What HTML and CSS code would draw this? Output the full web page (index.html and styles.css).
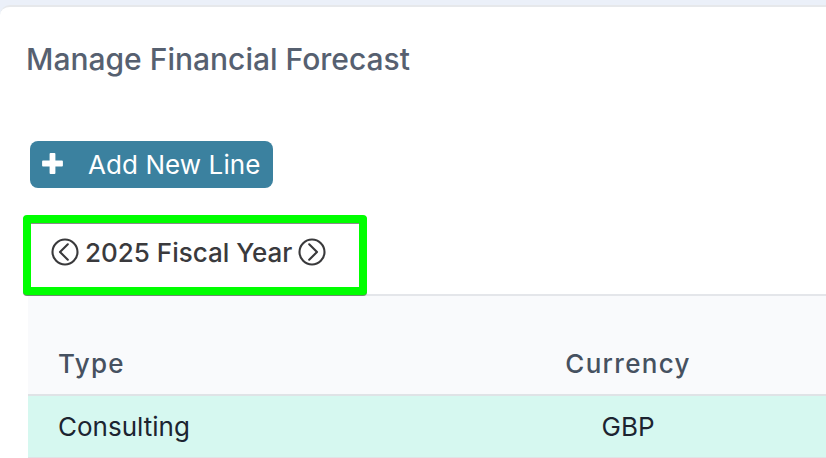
FILE: index.html
```html
<!DOCTYPE html>
<html lang="en">
<head>
    <meta charset="UTF-8">
    <meta name="viewport" content="width=device-width, initial-scale=1.0">
    <title>Manage Financial Forecast</title>
    <link rel="stylesheet" href="styles.css">
</head>
<body>
    <main class="card">
        <h1 class="card-title">Manage Financial Forecast</h1>

        <button class="btn-add" type="button">
            <svg class="icon-plus" viewBox="0 0 21 21">
                <path d="M8.5 1h4v7.5H20v4h-7.5V20h-4v-7.5H1v-4h7.5z"/>
            </svg>
            <span>Add New Line</span>
        </button>

        <!-- Year switcher -->
        <div class="year-bar">
            <div class="year-picker">
                <svg class="icon-arrow" viewBox="0 0 28 28">
                    <circle cx="14" cy="14" r="12.5"/>
                    <path d="M16.8 6.3L9 14l7.8 7.7"/>
                </svg>
                <span class="year-label">2025 Fiscal Year</span>
                <svg class="icon-arrow" viewBox="0 0 28 28">
                    <circle cx="14" cy="14" r="12.5"/>
                    <path d="M11.2 6.3L19 14l-7.8 7.7"/>
                </svg>
            </div>
        </div>

        <!-- Forecast lines -->
        <table class="forecast">
            <thead>
                <tr>
                    <th class="col-type">Type</th>
                    <th class="col-currency">Currency</th>
                </tr>
            </thead>
            <tbody>
                <tr>
                    <td class="col-type">Consulting</td>
                    <td class="col-currency">GBP</td>
                </tr>
            </tbody>
        </table>
    </main>
</body>
</html>
```

FILE: styles.css
```css
* {
    box-sizing: border-box;
}

body {
    margin: 0;
    padding-top: 5px;
    height: 458px;
    overflow: hidden;
    background-color: #ebf0f9;
    font-family: Inter, sans-serif;
    font-size: 26px;
}

.card {
    height: 460px;
    padding: 32px 0 0 28px;
    border-top: 2px solid #e6e8eb;
    border-radius: 10px 0 0 0;
    background-color: #fff;
}

.card-title {
    margin: 0 0 0 -2px;
    font-size: 30px;
    line-height: 40px;
    font-weight: 500;
    color: #566070;
}

/* Button */
.btn-add {
    display: flex;
    align-items: center;
    gap: 26px;
    width: 243px;
    height: 47px;
    margin: 62px 0 0 2px;
    padding: 0 12px;
    border: 0;
    border-radius: 8px;
    background-color: #3b819f;
    color: #fff;
    font-family: inherit;
    font-size: 26px;
    letter-spacing: 0.08px;
    white-space: nowrap;
}

.icon-plus {
    flex: none;
    width: 21px;
    height: 21px;
    margin: 0 -1px 2px 0;
    fill: #fff;
    stroke: #fff;
    stroke-width: 1.8;
    stroke-linejoin: round;
}

/* Year switcher */
.year-bar {
    height: 108px;
    padding-top: 27px;
    border-bottom: 2px solid #e4e6ea;
}

.year-picker {
    display: flex;
    align-items: center;
    gap: 6px;
    width: 344px;
    height: 80px;
    margin-left: -5px;
    padding: 0 0 5px 20px;
    border: 8px solid #00ff00;
    border-radius: 4px;
    background-color: #fff;
    box-shadow: 0 1px 0 #6f8a6f, inset 0 1px 0 #8a8a8a;
    color: #3a3a3d;
}

.year-label {
    font-weight: 500;
    white-space: nowrap;
}

.icon-arrow {
    flex: none;
    width: 28px;
    height: 28px;
    margin-top: -1px;
    fill: none;
    stroke: #39393b;
    stroke-width: 2.1;
    stroke-linecap: round;
    stroke-linejoin: round;
}

/* Table */
.forecast {
    width: 799px;
    border-collapse: separate;
    border-spacing: 0;
    table-layout: fixed;
}

.forecast th {
    height: 100px;
    padding: 37px 0 0;
    border-bottom: 2px solid #dfe3e6;
    background-color: #f9fafc;
    font-weight: 500;
    letter-spacing: 1.3px;
    color: #465160;
}

.forecast td {
    height: 63px;
    padding: 0;
    border-bottom: 2px solid #dfe3e6;
    background-color: #d6f8f0;
    color: #1c2430;
}

.forecast .col-type {
    width: 401px;
    padding-left: 30px;
    text-align: left;
}

.forecast .col-currency {
    text-align: center;
}
```
